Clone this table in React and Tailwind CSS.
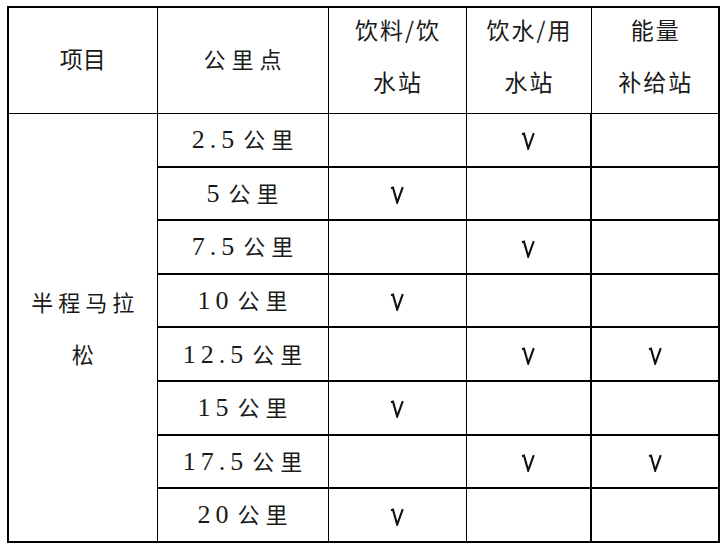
import React from "react";

const rows = [
  { num: "2.5", a: false, b: true, c: false },
  { num: "5", a: true, b: false, c: false },
  { num: "7.5", a: false, b: true, c: false },
  { num: "10", a: true, b: false, c: false },
  { num: "12.5", a: false, b: true, c: true },
  { num: "15", a: true, b: false, c: false },
  { num: "17.5", a: false, b: true, c: true },
  { num: "20", a: true, b: false, c: false },
];

const cjk = { fontFamily: '"Noto Sans CJK SC", sans-serif' };
const serif = { fontFamily: '"Liberation Serif", "Noto Sans CJK SC", serif' };

// the tick mark drawn as in the sheet: short hook at top left, then a V
const Tick = ({ on }) =>
  on ? (
    <svg width="14" height="18" viewBox="0 0 14 18" className="inline-block align-middle">
      <path d="M1 2.2 L3 1.6 L7.2 16.5 L12.8 1.2" fill="none" stroke="#111" strokeWidth="2.1" strokeLinejoin="miter" />
    </svg>
  ) : null;

const HeadCell = ({ top, bottom, last }) => (
  <th className={`border border-black font-normal text-[23px] tracking-[2px] pl-[2px] ${last ? "" : ""}`} style={cjk}>
    <div className="leading-[52px] -translate-y-[5px]">
      {top}
      <br />
      {bottom}
    </div>
  </th>
);

const App = () => {
  return (
    <div className="w-[728px] h-[551px] bg-white pl-[7px] pt-[6px] overflow-hidden">
      <table className="table-fixed border-collapse border-2 border-black text-[#1a1a1a]">
        <colgroup>
          <col className="w-[149px]" />
          <col className="w-[171px]" />
          <col className="w-[138px]" />
          <col className="w-[125px]" />
          <col className="w-[128px]" />
        </colgroup>
        <thead>
          <tr className="h-[106px]">
            <th className="border border-black font-normal text-[23px]" style={cjk}>
              <div className="-translate-y-[2px]">项目</div>
            </th>
            <th className="border border-black font-normal text-[22px] tracking-[6px] pl-[6px]" style={cjk}>
              <div className="-translate-y-[2px]">公里点</div>
            </th>
            <HeadCell top="饮料/饮" bottom="水站" />
            <HeadCell top="饮水/用" bottom="水站" />
            <HeadCell top="能量" bottom="补给站" />
          </tr>
        </thead>
        <tbody>
          {rows.map((r, i) => (
            <tr key={r.num} className="h-[53.6px]">
              {i === 0 && (
                <td
                  rowSpan={8}
                  className="border border-black text-center text-[22px] tracking-[5px] leading-[52px] pl-[5px]"
                  style={cjk}
                >
                  半程马拉
                  <br />
                  松
                </td>
              )}
              <td className="border border-b-2 border-black text-center pl-[6px] whitespace-nowrap">
                <span className="text-[26px] tracking-[5px]" style={serif}>
                  {r.num}
                </span>
                <span className="text-[22px] tracking-[6px] ml-[4px]" style={cjk}>
                  公里
                </span>
              </td>
              <td className="border border-b-2 border-black text-center">
                <Tick on={r.a} />
              </td>
              <td className="border border-b-2 border-r-2 border-black text-center">
                <Tick on={r.b} />
              </td>
              <td className="border border-b-2 border-black text-center">
                <Tick on={r.c} />
              </td>
            </tr>
          ))}
        </tbody>
      </table>
    </div>
  );
};

export default App;
